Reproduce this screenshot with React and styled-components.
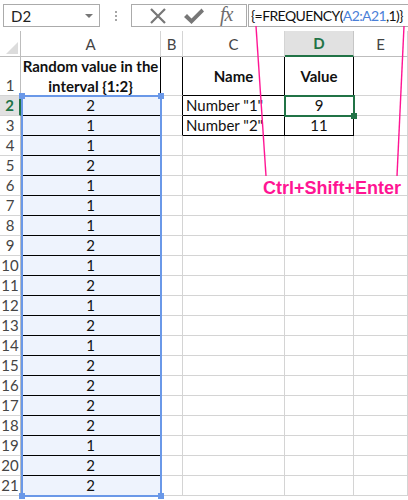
import React from "react";
import styled, { createGlobalStyle } from "styled-components";

const GlobalStyle = createGlobalStyle`
  html, body {
    margin: 0;
    padding: 0;
    background: #fff;
    overflow: hidden;
  }
  body {
    font-family: Lato, "Liberation Sans", sans-serif;
  }
`;

const values = [2, 1, 1, 2, 1, 1, 1, 2, 1, 2, 1, 2, 1, 2, 2, 2, 2, 1, 2, 2];
const GRID = "#d4d4d4";
const INK = "#000";
const GREEN = "#217346";
const PINK = "#ff1493";

const Page = styled.div`
  position: relative;
  width: 408px;
  height: 500px;
  overflow: hidden;
`;

const FormulaBar = styled.div`
  display: flex;
  align-items: center;
  height: 31px;
  padding: 0 0 0 3px;
  box-sizing: border-box;
`;

const NameBox = styled.div`
  flex: 0 0 97px;
  height: 23px;
  border: 1px solid #ababab;
  box-sizing: border-box;
  display: flex;
  align-items: center;
  justify-content: space-between;
  padding: 0 6px 0 7px;
  font-size: 15px;
  color: #222;
`;

const Caret = styled.span`
  width: 0;
  height: 0;
  border-left: 4px solid transparent;
  border-right: 4px solid transparent;
  border-top: 4px solid #777;
`;

const Dots = styled.div`
  flex: 0 0 31px;
  display: flex;
  flex-direction: column;
  align-items: center;
  gap: 2px;
  span {
    width: 2px;
    height: 2px;
    background: #a6a6a6;
  }
`;

const IconBox = styled.div`
  flex: 0 0 116px;
  height: 23px;
  border: 1px solid #ababab;
  box-sizing: border-box;
  display: flex;
  align-items: center;
  justify-content: space-around;
  padding: 0 6px 0 8px;
  color: #777;
`;

const Fx = styled.span`
  font-family: "Liberation Serif", serif;
  font-style: italic;
  font-size: 20px;
  color: #6d6d6d;
  letter-spacing: -1px;
  margin-top: -3px;
`;

const FormulaBox = styled.div`
  flex: 1;
  min-width: 0;
  overflow: hidden;
  height: 23px;
  margin-left: 1px;
  border: 1px solid #ababab;
  border-right: none;
  box-sizing: border-box;
  display: flex;
  align-items: center;
  padding-left: 2px;
  font-size: 14px;
  letter-spacing: -0.6px;
  white-space: nowrap;
  color: #111;
`;

const Ref = styled.span`
  color: #4b7fd8;
`;

const Sheet = styled.div`
  position: relative;
  display: grid;
  grid-template-columns: 21px 140px 22px 102px 69px 1fr;
  grid-template-rows: 26px 39px repeat(20, 20px);
`;

const Cell = styled.div`
  box-sizing: border-box;
  border-right: 1px solid ${(p) => p.$r || GRID};
  border-bottom: 1px solid ${(p) => p.$b || GRID};
  background: ${(p) => p.$bg || "#fff"};
  display: flex;
  align-items: ${(p) => p.$valign || "flex-end"};
  justify-content: ${(p) => p.$align || "flex-start"};
  text-align: ${(p) => (p.$align === "center" ? "center" : "left")};
  padding: 0 3px 1px;
  font-size: 15px;
  line-height: ${(p) => (p.$tall ? "20px" : "18px")};
  font-weight: ${(p) => (p.$bold ? 700 : 400)};
  color: #111;
  white-space: nowrap;
  overflow: visible;
`;

const ColHead = styled.div`
  box-sizing: border-box;
  border-right: 1px solid ${(p) => (p.$active ? "#c6c6c6" : GRID)};
  border-bottom: ${(p) => (p.$active ? `2px solid ${GREEN}` : "1px solid #bdbdbd")};
  background: ${(p) => (p.$active ? "#e1e1e1" : "#fff")};
  display: flex;
  align-items: center;
  justify-content: center;
  font-size: 15px;
  color: ${(p) => (p.$active ? GREEN : "#444")};
  font-weight: ${(p) => (p.$active ? 700 : 400)};
`;

const Corner = styled.div`
  position: relative;
  box-sizing: border-box;
  border-right: 1px solid #bdbdbd;
  border-bottom: 1px solid #bdbdbd;
  &::after {
    content: "";
    position: absolute;
    right: 2px;
    bottom: 2px;
    width: 0;
    height: 0;
    border-left: 12px solid transparent;
    border-bottom: 12px solid #dcdcdc;
  }
`;

const RowHead = styled.div`
  box-sizing: border-box;
  border-right: ${(p) => (p.$active ? `2px solid ${GREEN}` : "1px solid #bdbdbd")};
  border-bottom: 1px solid ${GRID};
  background: ${(p) => (p.$active ? "#e1e1e1" : "#fff")};
  display: flex;
  align-items: flex-end;
  justify-content: center;
  padding-bottom: 1px;
  font-size: 15px;
  line-height: 18px;
  color: ${(p) => (p.$active ? GREEN : "#444")};
  font-weight: ${(p) => (p.$active ? 700 : 400)};
`;

const Frame = styled.div`
  position: absolute;
  box-sizing: border-box;
  pointer-events: none;
`;

const Selection = styled(Frame)`
  left: 21px;
  top: 64px;
  width: 141px;
  height: 402px;
  border: 2px solid #6a98e8;
`;

const Handle = styled.span`
  position: absolute;
  width: 6px;
  height: 6px;
  background: ${(p) => p.$color};
  ${(p) => (p.$top ? "top: -4px;" : "bottom: -4px;")}
  ${(p) => (p.$left ? "left: -4px;" : "right: -4px;")}
`;

const Active = styled(Frame)`
  left: 284px;
  top: 64px;
  width: 71px;
  height: 22px;
  border: 2px solid ${GREEN};
`;

const Overlay = styled.svg`
  position: absolute;
  left: 0;
  top: 0;
  pointer-events: none;
`;

const Note = styled.div`
  position: absolute;
  left: 263px;
  top: 178px;
  font-family: "Liberation Sans", Arial, sans-serif;
  font-weight: 700;
  font-size: 18px;
  color: ${PINK};
  white-space: nowrap;
`;

function XIcon() {
  return (
    <svg width="20" height="20" viewBox="0 0 20 20">
      <path d="M3 3 L17 17 M17 3 L3 17" stroke="#777" strokeWidth="2.2" fill="none" />
    </svg>
  );
}

function CheckIcon() {
  return (
    <svg width="22" height="20" viewBox="0 0 22 20">
      <path d="M1 11 L4 8 L8.5 12.5 L18.5 2.5 L21 5.5 L8.5 18 Z" fill="#777" />
    </svg>
  );
}

export default function App() {
  const rows = [];
  values.forEach((v, i) => {
    const r = i + 2;
    const active = r === 2;
    rows.push(
      <RowHead key={`h${r}`} $active={active}>
        {r}
      </RowHead>,
      <Cell key={`a${r}`} $align="center" $bg="#eef3fd" $r={INK} $b={INK}>
        {v}
      </Cell>,
      <Cell key={`b${r}`} $r={r <= 3 ? INK : undefined} />,
      <Cell key={`c${r}`} $r={r <= 3 ? INK : undefined} $b={r <= 3 ? INK : undefined}>
        {r === 2 ? 'Number "1"' : r === 3 ? 'Number "2"' : ""}
      </Cell>,
      <Cell key={`d${r}`} $align="center" $r={r <= 3 ? INK : undefined} $b={r <= 3 ? INK : undefined}>
        {r === 2 ? 9 : r === 3 ? 11 : ""}
      </Cell>,
      <Cell key={`e${r}`} />
    );
  });

  return (
    <Page>
      <GlobalStyle />
      <FormulaBar>
        <NameBox>
          D2
          <Caret />
        </NameBox>
        <Dots>
          <span />
          <span />
          <span />
        </Dots>
        <IconBox>
          <XIcon />
          <CheckIcon />
          <Fx>fx</Fx>
        </IconBox>
        <FormulaBox>
          {"{=FREQUENCY("}
          <Ref>A2:A21</Ref>
          {",1)}"}
        </FormulaBox>
      </FormulaBar>

      <Sheet>
        <Corner />
        <ColHead>A</ColHead>
        <ColHead>B</ColHead>
        <ColHead>C</ColHead>
        <ColHead $active>D</ColHead>
        <ColHead>E</ColHead>

        <RowHead>1</RowHead>
        <Cell $align="center" $valign="center" $bold $tall $r={INK} $b={INK}>
          Random value in the
          <br />
          interval {"{1:2}"}
        </Cell>
        <Cell $r={INK} />
        <Cell $align="center" $valign="center" $bold $r={INK} $b={INK}>
          Name
        </Cell>
        <Cell $align="center" $valign="center" $bold $r={INK} $b={INK}>
          Value
        </Cell>
        <Cell />

        {rows}

        <Selection>
          <Handle $color="#6a98e8" $top $left />
          <Handle $color="#6a98e8" $top />
          <Handle $color="#6a98e8" $left />
          <Handle $color="#6a98e8" />
        </Selection>
        <Active>
          <Handle $color={GREEN} />
        </Active>
      </Sheet>

      <Overlay width="408" height="500">
        <line x1="256" y1="26" x2="266" y2="176" stroke={PINK} strokeWidth="1.4" />
        <line x1="404" y1="26" x2="397" y2="176" stroke={PINK} strokeWidth="1.4" />
      </Overlay>
      <Note>Ctrl+Shift+Enter</Note>
    </Page>
  );
}
